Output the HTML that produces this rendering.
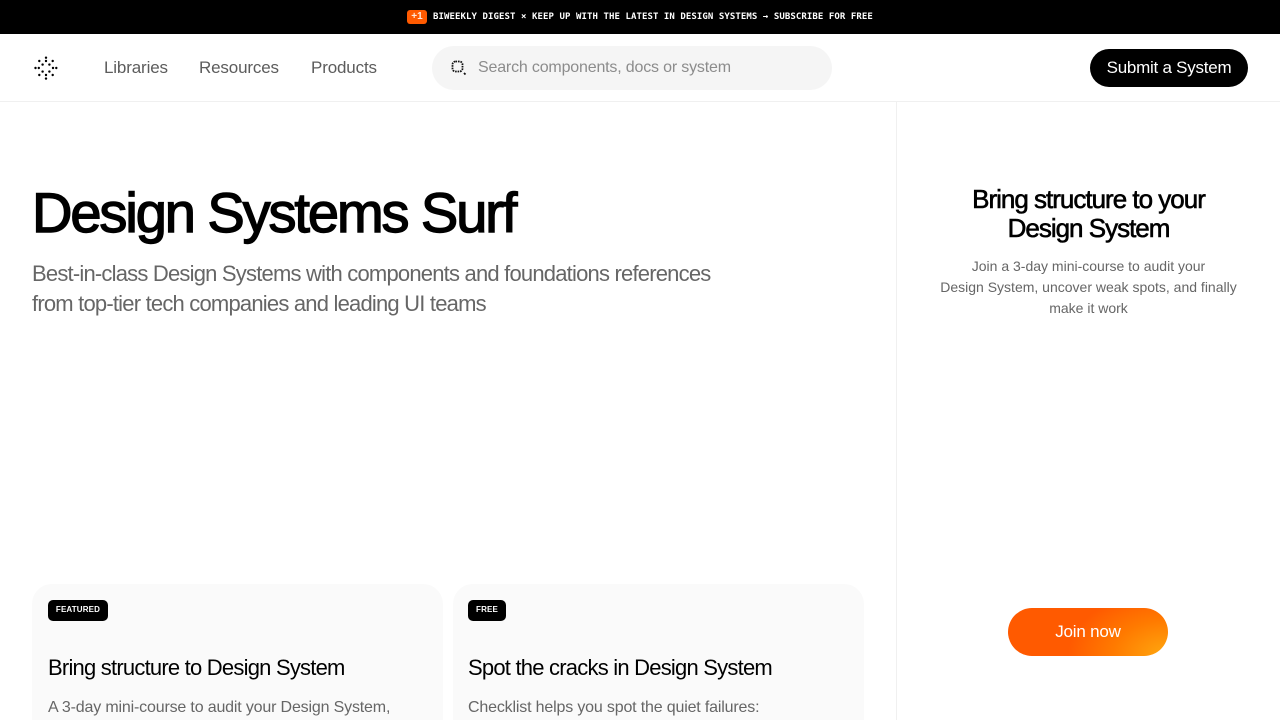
<!DOCTYPE html>
<html lang="en"><head><meta charset="utf-8"><title>Design Systems Surf</title>
<style>
*{box-sizing:border-box;margin:0;padding:0}
html,body{width:1280px;height:720px;overflow:hidden;background:#fff;font-family:"Liberation Sans",sans-serif}
#wrap{position:relative;width:1280px;height:720px;overflow:hidden}
.a{position:absolute;white-space:nowrap}
#top{left:0;top:0;width:1280px;height:34px;background:#000}
.mono{font-family:"DejaVu Sans Mono","Liberation Mono",monospace;font-size:9px;font-weight:700;color:#fff;line-height:12px;letter-spacing:.08px}
#plus{left:407px;top:10px;width:20px;height:14px;background:#ff5a00;border-radius:3px;color:#ffe9dc;font-size:10px;font-weight:700;text-align:center;line-height:14px}
#hdr{left:0;top:101px;width:1280px;height:1px;background:#f0f0f0}
.nav{top:58px;font-size:17px;line-height:19px;color:#5c5c5c;letter-spacing:-.15px}
#search{left:432px;top:46px;width:400px;height:44px;border-radius:22px;background:#f5f5f5}
#ph{left:478px;top:58px;font-size:16px;line-height:19px;color:#8c8c8c;letter-spacing:-.18px}
#sub{left:1090px;top:49px;width:158px;height:38px;border-radius:19px;background:#000;color:#fff;font-size:17px;line-height:38px;text-align:center;letter-spacing:-.25px}
#div{left:896px;top:102px;width:1px;height:618px;background:#f0f0f0}
h1{left:32px;top:180px;font-size:56px;line-height:66px;font-weight:400;letter-spacing:-2.08px;color:#000;-webkit-text-stroke:1.4px #000}
#lead{left:32px;top:259px;font-size:22px;line-height:30px;color:#666;letter-spacing:-.795px}
.card{top:584px;width:411px;height:136px;background:#fafafa;border-radius:20px 20px 0 0}
.tag{top:600px;height:21px;border-radius:5px;background:#000;color:#fff;font-size:8px;font-weight:700;line-height:20px;text-align:center;letter-spacing:.15px}
.ct{top:654px;font-size:22px;line-height:27px;color:#000;letter-spacing:-.78px}
.cd{top:697px;font-size:16px;line-height:21px;color:#666;letter-spacing:-.17px}
#st{left:897px;width:383px;top:185px;text-align:center;font-size:26px;line-height:29px;font-weight:400;color:#000;letter-spacing:-1px;-webkit-text-stroke:.6px #000}
#sd{left:897px;width:383px;top:256px;text-align:center;font-size:14px;line-height:21px;color:#666}
#join{left:1008px;top:608px;width:160px;height:48px;border-radius:24px;background:radial-gradient(100px 65px at 100% 100%,#ffa90f 0,rgba(255,140,0,.65) 55%,rgba(255,90,0,0) 100%),#ff5a00;color:#fff;font-size:17px;line-height:48px;text-align:center;letter-spacing:-.2px}
</style></head><body><div id="wrap">
<div class="a" id="top"></div>
<div class="a" id="plus">+1</div>
<div class="a mono" style="left:433px;top:11px">BIWEEKLY DIGEST × KEEP UP WITH THE LATEST IN DESIGN SYSTEMS → SUBSCRIBE FOR FREE</div>
<svg class="a" style="left:34px;top:56px" width="24" height="24" viewBox="-12 -12 24 24" fill="#000">
<circle cx="0" cy="-10.3" r="1.2"/><circle cx="0" cy="-7" r="1.2"/><circle cx="-6.7" cy="-7" r="1.2"/><circle cx="6.7" cy="-7" r="1.2"/><circle cx="-3.4" cy="-3.4" r="1.2"/><circle cx="3.4" cy="-3.4" r="1.2"/><circle cx="-10.5" cy="0" r="1.2"/><circle cx="-7.2" cy="0" r="1.2"/><circle cx="7" cy="0" r="1.2"/><circle cx="10.3" cy="0" r="1.2"/><circle cx="-3.4" cy="3.6" r="1.2"/><circle cx="3.4" cy="3.6" r="1.2"/><circle cx="-6.7" cy="7" r="1.2"/><circle cx="6.7" cy="7" r="1.2"/><circle cx="0" cy="7" r="1.2"/><circle cx="0" cy="10.6" r="1.2"/></svg>
<div class="a nav" style="left:104px">Libraries</div>
<div class="a nav" style="left:199px">Resources</div>
<div class="a nav" style="left:311px">Products</div>
<div class="a" id="search"></div>
<svg class="a" style="left:451px;top:60px" width="16" height="16" viewBox="0 0 16 16" fill="none" stroke="#111" stroke-width="1.8" stroke-dasharray="1.6 .9"><rect x="1.5" y="1.5" width="10" height="10" rx="3"/><path d="M13 13l1.5 1.5" stroke-dasharray="none"/></svg>
<div class="a" id="ph">Search components, docs or system</div>
<div class="a" id="sub">Submit a System</div>
<div class="a" id="hdr"></div>
<div class="a" id="div"></div>
<h1 class="a">Design Systems Surf</h1>
<div class="a" id="lead">Best-in-class Design Systems with components and foundations references<br>from top-tier tech companies and leading UI teams</div>
<div class="a card" style="left:32px"></div>
<div class="a card" style="left:453px"></div>
<div class="a tag" style="left:48px;width:60px">FEATURED</div>
<div class="a tag" style="left:468px;width:38px">FREE</div>
<div class="a ct" style="left:48px">Bring structure to Design System</div>
<div class="a ct" style="left:468px">Spot the cracks in Design System</div>
<div class="a cd" style="left:48px">A 3-day mini-course to audit your Design System,</div>
<div class="a cd" style="left:468px">Checklist helps you spot the quiet failures:</div>
<div class="a" id="st">Bring structure to your<br>Design System</div>
<div class="a" id="sd">Join a 3-day mini-course to audit your<br>Design System, uncover weak spots, and finally<br>make it work</div>
<div class="a" id="join">Join now</div>
</div></body></html>
